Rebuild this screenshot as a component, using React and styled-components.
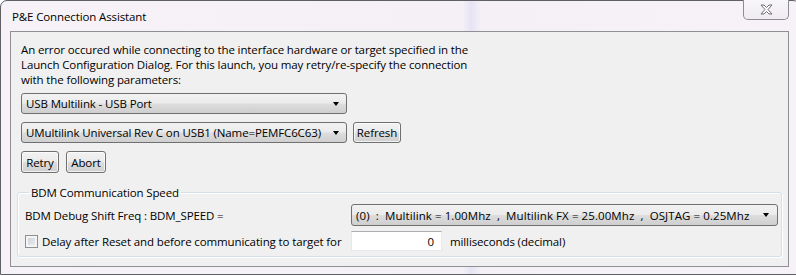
import * as React from 'react';
import styled, { createGlobalStyle } from 'styled-components';

const GlobalStyle = createGlobalStyle`
    html, body {
        margin: 0;
        padding: 0;
        width: 796px;
        height: 276px;
        overflow: hidden;
        background: #ffffff;
    }
    * {
        box-sizing: border-box;
    }
`;

const UI_FONT = `"Open Sans", "Noto Sans", "DejaVu Sans", sans-serif`;

const Window = styled.div`
    width: 800px;
    height: 275px;
    border: 1px solid #5e6064;
    border-radius: 7px 7px 0 0;
    background: linear-gradient(90deg, #f7f2f7 0px, #f5f0f6 462px, #e6e3f4 470px, #f5f0f6 480px, #f7f2f7 100%);
    padding: 0 10px 7px 9px;
    display: flex;
    flex-direction: column;
    font-family: ${UI_FONT};
    font-size: 11.5px;
    letter-spacing: -0.12px;
    color: #000000;
`;

const TitleBar = styled.div`
    height: 30px;
    display: flex;
    justify-content: space-between;
    align-items: flex-start;
`;

const TitleText = styled.span`
    padding: 8px 0 0 2px;
    line-height: 16px;
    color: #000000;
`;

const CloseButton = styled.div`
    width: 46px;
    height: 20px;
    margin-top: -1px;
    border: 1px solid #8c8c94;
    border-top: none;
    border-radius: 0 0 5px 5px;
    background: linear-gradient(#f9f6fa, #efebf1);
    display: flex;
    align-items: center;
    justify-content: center;
`;

const Panel = styled.div`
    flex: 1;
    background: #f0f0f0;
    border: 1px solid #8f9093;
    display: flex;
    flex-direction: column;
`;

const TopSection = styled.div`
    padding: 10px 10px 0 10px;
    display: flex;
    flex-direction: column;
    align-items: flex-start;
`;

const Message = styled.p`
    margin: 0;
    line-height: 15px;
    white-space: nowrap;
`;

const Row = styled.div`
    display: flex;
    align-items: center;
    gap: ${p => p.gap || '6px'};
    margin-top: ${p => p.mt || '0px'};
`;

const Combo = styled.div`
    width: ${p => p.w};
    height: ${p => p.h || '21px'};
    border: 1px solid #707070;
    border-radius: 3px;
    background: linear-gradient(#f2f2f2 0%, #ebebeb 48%, #dddddd 52%, #cfcfcf 100%);
    display: flex;
    align-items: center;
    justify-content: space-between;
    padding: 0 5px 0 4px;
    white-space: pre;
    line-height: 15px;
    letter-spacing: ${p => p.ls || '-0.12px'};
`;

const Arrow = styled.span`
    flex-shrink: 0;
    width: 0;
    height: 0;
    border-left: 3.5px solid transparent;
    border-right: 3.5px solid transparent;
    border-top: 4px solid #000000;
    margin-right: ${p => p.mr || '2px'};
`;

const Button = styled.div`
    width: ${p => p.w};
    height: ${p => p.h || '21px'};
    border: 1px solid #707070;
    border-radius: 3px;
    background: linear-gradient(#f2f2f2 0%, #ebebeb 48%, #dddddd 52%, #cfcfcf 100%);
    box-shadow: inset 0 0 0 1px rgba(255, 255, 255, 0.7);
    display: flex;
    align-items: center;
    justify-content: center;
    line-height: 15px;
`;

const GroupBox = styled.fieldset`
    margin: 12px 6px 3px 6px;
    padding: 4px 5px 5px 7px;
    border: 1px solid #d5dfe5;
    border-radius: 3px;
    box-shadow: inset 1px 1px 0 #ffffff, 1px 1px 0 #ffffff;
    min-width: 0;
`;

const Legend = styled.legend`
    padding: 0 2px;
    margin-left: 4px;
    line-height: 15px;
`;

const SpeedGrid = styled.div`
    display: grid;
    grid-template-columns: 326px 1fr;
    grid-template-rows: 22px 20px;
    row-gap: 5px;
    align-items: center;
`;

const Label = styled.span`
    line-height: 15px;
    white-space: nowrap;
`;

const CheckRow = styled.label`
    display: flex;
    align-items: center;
    gap: 4px;
`;

const CheckBox = styled.span`
    display: block;
    flex-shrink: 0;
    width: 13px;
    height: 13px;
    border: 1px solid #8e8f8f;
    background: linear-gradient(135deg, #cbcfd5 0%, #eef0f2 100%);
    box-shadow: inset 0 0 0 2px #f4f4f4;
`;

const NumberField = styled.div`
    width: 91px;
    height: 20px;
    background: #ffffff;
    border: 1px solid #e3e9ef;
    border-top-color: #abadb3;
    display: flex;
    align-items: center;
    justify-content: flex-end;
    padding-right: 7px;
`;

function CloseIcon() {
    return (
        <svg width="13" height="11" viewBox="0 0 13 11">
            <path
                d="M1 1 H4 L6.5 3.5 L9 1 H12 L8 5.5 L12 10 H9 L6.5 7.5 L4 10 H1 L5 5.5 Z"
                fill="#ffffff"
                stroke="#6d6d74"
                strokeWidth="1"
                strokeLinejoin="round"
            />
        </svg>
    );
}

const speedOption = '(0)  :  Multilink = 1.00Mhz  ,  Multilink FX = 25.00Mhz  ,  OSJTAG = 0.25Mhz';

export default function App() {
    return (
        <>
            <GlobalStyle />
            <Window>
                <TitleBar>
                    <TitleText>P&amp;E Connection Assistant</TitleText>
                    <CloseButton>
                        <CloseIcon />
                    </CloseButton>
                </TitleBar>
                <Panel>
                    <TopSection>
                        <Message>
                            An error occured while connecting to the interface hardware or target specified in the<br />
                            Launch Configuration Dialog. For this launch, you may retry/re-specify the connection<br />
                            with the following parameters:
                        </Message>
                        <Row mt='6px'>
                            <Combo w='326px'>
                                <span>USB Multilink - USB Port</span>
                                <Arrow />
                            </Combo>
                        </Row>
                        <Row mt='8px'>
                            <Combo w='326px'>
                                <span>UMultilink Universal Rev C on USB1 (Name=PEMFC6C63)</span>
                                <Arrow />
                            </Combo>
                            <Button w='48px'>Refresh</Button>
                        </Row>
                        <Row mt='8px' gap='7px'>
                            <Button w='38px' h='22px'>Retry</Button>
                            <Button w='40px' h='22px'>Abort</Button>
                        </Row>
                    </TopSection>
                    <GroupBox>
                        <Legend>BDM Communication Speed</Legend>
                        <SpeedGrid>
                            <Label>BDM Debug Shift Freq : BDM_SPEED =</Label>
                            <Combo w='427px' h='22px' ls='0.08px'>
                                <span>{speedOption}</span>
                                <Arrow mr='3px' />
                            </Combo>
                            <CheckRow>
                                <CheckBox />
                                <Label>Delay after Reset and before communicating to target for</Label>
                            </CheckRow>
                            <Row gap='8px'>
                                <NumberField>0</NumberField>
                                <Label>milliseconds (decimal)</Label>
                            </Row>
                        </SpeedGrid>
                    </GroupBox>
                </Panel>
            </Window>
        </>
    );
}
